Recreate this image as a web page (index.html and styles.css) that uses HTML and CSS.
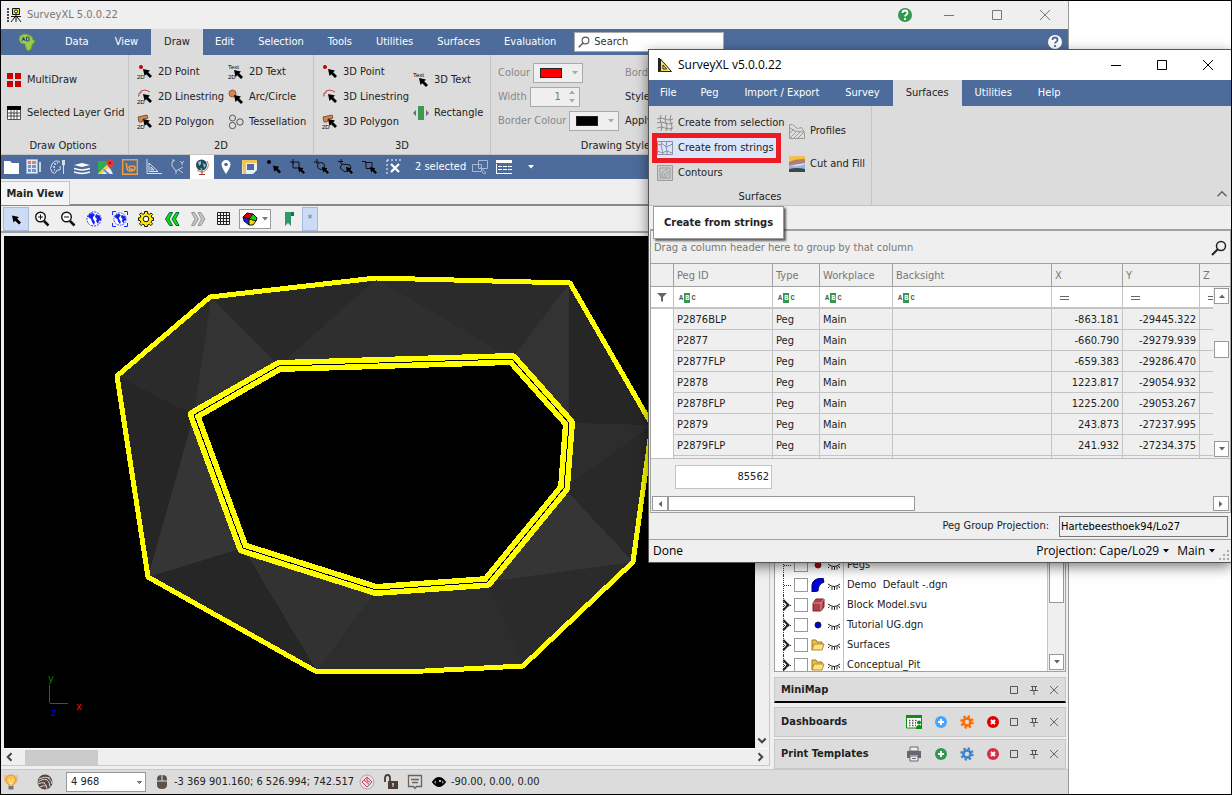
FILE: index.html
```html
<!DOCTYPE html>
<html lang="en">
<head>
<meta charset="utf-8">
<title>SurveyXL 5.0.0.22</title>
<link rel="stylesheet" href="styles.css">
</head>
<body>
<svg class="defs" aria-hidden="true">
  <symbol id="arrow" viewBox="0 0 9 9"><path d="M0 0 7 1.500 5.200 3.200 9 7 7 9 3.200 5.200 1.500 7Z"/></symbol>
  <symbol id="p2d" viewBox="0 0 16 16"><circle cx="4" cy="3" r="2" fill="#c80000"/><use href="#arrow" x="6" y="5" width="9" height="9"/><text class="tag" x="0" y="15">2D</text></symbol>
  <symbol id="l2d" viewBox="0 0 16 16"><path d="M1 7h1V4h2V2l4-1 3 1 2 1" fill="none" stroke="#c04040"/><use href="#arrow" x="6" y="5" width="9" height="9"/><text class="tag" x="0" y="15">2D</text></symbol>
  <symbol id="g2d" viewBox="0 0 16 16"><path d="M1 3l9-2 1 3-5 1-1 3H2Z" fill="#d08850" stroke="#8a5028"/><use href="#arrow" x="6" y="5" width="9" height="9"/><text class="tag" x="0" y="15">2D</text></symbol>
  <symbol id="t2d" viewBox="0 0 16 16"><text class="tag" x="0" y="5">Text</text><use href="#arrow" x="6" y="6" width="9" height="9"/><text class="tag" x="0" y="15">2D</text></symbol>
  <symbol id="arc" viewBox="0 0 16 16"><circle cx="4.500" cy="4.500" r="3.500" fill="#d08850" stroke="#8a6048"/><use href="#arrow" x="6" y="6" width="9" height="9"/></symbol>
  <symbol id="tess" viewBox="0 0 16 16"><g fill="none" stroke="#555"><circle cx="4.500" cy="4" r="3"/><circle cx="4.500" cy="11.500" r="3.200"/><circle cx="12" cy="8" r="3.200"/></g></symbol>
  <symbol id="p3d" viewBox="0 0 16 16"><circle cx="3" cy="3" r="2" fill="#c80000"/><use href="#arrow" x="6" y="5" width="9" height="9"/></symbol>
  <symbol id="l3d" viewBox="0 0 16 16"><path d="M1 7h1V4h2V2l4-1 3 1 2 1" fill="none" stroke="#c04040"/><use href="#arrow" x="6" y="5" width="9" height="9"/></symbol>
  <symbol id="t3d" viewBox="0 0 16 16"><text class="tag" x="0" y="5">Text</text><use href="#arrow" x="6" y="6" width="9" height="9"/></symbol>
  <symbol id="rect" viewBox="0 0 16 16"><path d="M5 1h6v14H5z" fill="#3a9a50"/><path d="M3 5v6L0 8zM13 5v6l3-3z" fill="#667"/></symbol>
  <symbol id="multi" viewBox="0 0 16 16"><path d="M1 1h6v6H1zM9 1h6v6H9zM1 9h6v6H1zM9 9h6v6H9z" fill="#c80000"/></symbol>
  <symbol id="grid" viewBox="0 0 16 16"><path d="M1 1h14v14H1z" fill="#fff"/><path d="M1 1h14v4H1z"/><path d="M1.500 4v10.500h13V4M5 4v10M8 4v10M11 4v10M2 8h12M2 11h12" fill="none" stroke="#222" stroke-width=".8"/></symbol>
  <symbol id="mesh" viewBox="0 0 16 16"><path d="M4 0q-2 4 0 8t0 8M9 0q-2 4 0 8t0 8M14 0q-2 4 0 8t0 8M0 4q4-2 8 0t8 0M0 8q4-2 8 0t8 0M0 13q4-2 8 0t8 0" fill="none" stroke="#8c8c8c"/></symbol>
  <symbol id="strings" viewBox="0 0 16 16"><path d="M.5 1.500h15v13H.5zM.5 5l5-1 4 3 6-3M.5 11l5 2 4-2 6 2M5 1 4 5l2 8-1 2M10 1 9 7l1 4v4" fill="none" stroke="#8791a3"/></symbol>
  <symbol id="contours" viewBox="0 0 16 16"><path d="M.5.500h15v15H.5zM3 3h10v10H3zM5 12c0-7 2-7 6-7M7 13c0-5 2-6 5-6M9 13c0-3 1-4 3-4" fill="#ccc" stroke="#9c9c9c"/></symbol>
  <symbol id="profiles" viewBox="0 0 16 16"><path d="M.5 15.500V1.500h3l5 4 4-1 3 5v6zM1 5l5 3 9 1M1 15l6-6M5 15l6-6M9 15l6-6M1 10l4-4" fill="none" stroke="#9a9a9a"/></symbol>
  <symbol id="cutfill" viewBox="0 0 16 16"><path d="M0 0h16v6H0z" fill="#f5c04a"/><path d="M0 6q5-3 16-3v4q-8 1-16 3z" fill="#b08070"/><path d="M0 9q8 3 16-1v6H0z" fill="#8ab8f0"/><path d="M0 13q8-2 16 0v3H0z" fill="#444"/></symbol>
  <symbol id="min" viewBox="0 0 12 12"><path d="M1 6.500h10" stroke="currentColor"/></symbol>
  <symbol id="max" viewBox="0 0 12 12"><path d="M1.500 1.500h9v9h-9z" fill="none" stroke="currentColor"/></symbol>
  <symbol id="x" viewBox="0 0 12 12"><path d="M1 1l10 10M11 1 1 11" stroke="currentColor"/></symbol>
  <symbol id="boxs" viewBox="0 0 10 10"><path d="M1.500 1.500h7v7h-7z" fill="none" stroke="#555"/></symbol>
  <symbol id="pin" viewBox="0 0 10 10"><path d="M2 1.500h6M3.500 1v4M6.500 1v4M1 5.500h8M5 6v4" fill="none" stroke="#555"/></symbol>
  <symbol id="xs" viewBox="0 0 10 10"><path d="M1 1l8 8M9 1 1 9" stroke="#666"/></symbol>
  <symbol id="mag" viewBox="0 0 16 16"><circle cx="10" cy="6" r="4.500" fill="none" stroke="currentColor" stroke-width="1.500"/><path d="M7 9l-6 6" stroke="currentColor" stroke-width="2"/></symbol>
  <symbol id="help" viewBox="0 0 16 16"><circle cx="8" cy="8" r="7" fill="currentColor"/><path class="q" d="M5.500 6q0-2.500 2.500-2.500T10.500 6q0 1.200-1.500 2-1 .600-1 1.500M8 11v2" fill="none" stroke-width="1.800"/></symbol>
  <symbol id="globe" viewBox="0 0 16 16"><circle cx="8" cy="8" r="7" fill="#fff" stroke="#1b2cff" stroke-dasharray="2 1"/><path d="M3 3l4-1 2 2-2 2v2l2 3-1 3-2-3-1-3-3-2zM10 3l4 2 1 4-2 1-1 3-2-3 1-2-2-2z" fill="#1420f0"/></symbol>
  <symbol id="globebox" viewBox="0 0 16 16"><path d="M.5 4V.5H4M12 .5h3.500V4M15.500 12v3.500H12M4 15.500H.5V12" fill="none" stroke="#1b2cff"/><use href="#globe" x="1" y="1" width="14" height="14"/></symbol>
  <symbol id="gear" viewBox="0 0 16 16"><circle cx="8" cy="8" r="6.200" fill="none" stroke="currentColor" stroke-width="3" stroke-dasharray="2.500 2.370"/><circle cx="8" cy="8" r="4" fill="none" stroke="currentColor" stroke-width="3"/></symbol>
  <symbol id="ygear" viewBox="0 0 16 16"><path d="M6.500.500h3v2l2 .8 1.500-1.400 1.600 1.600L13.200 5l.8 1.800h1.500v2.700H14l-.8 1.800 1.400 1.500-1.800 1.800-1.500-1.400-1.800.8v1.500h-3V14l-1.800-.8-1.500 1.400-1.800-1.800 1.400-1.500L2 9.500H.5V6.800H2L2.800 5 1.400 3.500 3.200 1.900l1.500 1.400 1.800-.8z" fill="#ffe800" stroke="#111"/><circle cx="8" cy="8" r="2.800" fill="#fff" stroke="#111"/></symbol>
  <symbol id="plus" viewBox="0 0 12 12"><circle cx="6" cy="6" r="6" fill="currentColor"/><path d="M6 3v6M3 6h6" stroke="#fff" stroke-width="2"/></symbol>
  <symbol id="del" viewBox="0 0 12 12"><circle cx="6" cy="6" r="6" fill="currentColor"/><path d="M4 4l4 4M8 4l-4 4" stroke="#fff" stroke-width="2"/></symbol>
  <symbol id="lash" viewBox="0 0 12 8"><path d="M0 1q6 5 12 0M1.500 3.500 0 5M4 4v3M6.500 4v3M9 3.500v3M10.500 3l1.500 2" fill="none" stroke="#222"/></symbol>
  <symbol id="folder" viewBox="0 0 14 12"><path d="M1 1h4l1 2h5v3H4l-3 5z" fill="#e8c24e" stroke="#a57b14"/><path d="M3 5h10l-2 6H1z" fill="#ffe08a" stroke="#b68b20"/></symbol>
  <symbol id="caret" viewBox="0 0 6 4"><path d="M0 0h6L3 3.500z" fill="currentColor"/></symbol>
  <symbol id="cropsel" viewBox="0 0 16 16"><path d="M3 0v5M0 3h9v6H3V3" fill="none" stroke="#111"/><use href="#arrow" x="8" y="8" width="7" height="7"/></symbol>
  <symbol id="chev" viewBox="0 0 8 8"><path d="M1 2l3 3 3-3" fill="none" stroke="#444" stroke-width="1.600"/></symbol>
  <symbol id="thin" viewBox="0 0 8 8"><path d="M1 5.500l3-3 3 3" fill="none" stroke="#666"/></symbol>
</svg>

<div class="desktop">
  <main class="window app">
    <header class="titlebar">
      <svg class="i16" viewBox="0 0 16 16"><path d="M1 1v14" stroke="#111" stroke-width="1.500" stroke-dasharray="2 1"/><path d="M5.500 1.500h7v6h-7z" fill="#ffe800" stroke="#111"/><circle cx="9" cy="4.500" r="1.500" fill="#fff" stroke="#111"/><path d="M4 9.500h10M9 8v7M8 10l-4 5M10 10l4 5" stroke="#111" fill="none"/></svg>
      <span class="name">SurveyXL 5.0.0.22</span>
      <button class="ghelp" aria-label="Help"><svg class="i16"><use href="#help"/></svg></button>
      <button class="wbtn" aria-label="Minimize"><svg class="i12"><use href="#min"/></svg></button>
      <button class="wbtn" aria-label="Maximize"><svg class="i12"><use href="#max"/></svg></button>
      <button class="wbtn" aria-label="Close"><svg class="i12"><use href="#x"/></svg></button>
    </header>
    <nav class="menubar">
      <button class="logo" aria-label="Application menu"><svg width="18" height="18" viewBox="0 0 18 18"><path d="M2 3l4-2 5 1 3 2 1 3 2 1-3 4-1 4-3 2-2-3-1-4-4-1-2-3z" fill="#9ccb48" stroke="#6fa832"/><path d="M4 8l1.500-4L7 8M4.500 6.500h2M8.500 4v4h2l1-1-1-1 1-1-1-1z" fill="none" stroke="#23407a"/></svg></button>
      <button>Data</button><button>View</button><button class="on">Draw</button><button>Edit</button><button>Selection</button><button>Tools</button><button>Utilities</button><button>Surfaces</button><button>Evaluation</button>
      <label class="search"><svg width="12" height="12" color="#555"><use href="#mag"/></svg><input type="text" placeholder="Search" aria-label="Search"></label>
      <button class="mhelp" aria-label="Help"><svg class="i16"><use href="#help"/></svg></button>
    </nav>
    <section class="ribbon">
      <div class="group g1">
        <div class="cols"><div class="col two">
          <button><svg class="i16"><use href="#multi"/></svg>MultiDraw</button>
          <button><svg class="i16"><use href="#grid"/></svg>Selected Layer Grid</button>
        </div></div>
        <h3>Draw Options</h3>
      </div>
      <div class="group g2">
        <div class="cols"><div class="col">
          <button><svg class="i16"><use href="#p2d"/></svg>2D Point</button>
          <button><svg class="i16"><use href="#l2d"/></svg>2D Linestring</button>
          <button><svg class="i16"><use href="#g2d"/></svg>2D Polygon</button>
        </div><div class="col">
          <button><svg class="i16"><use href="#t2d"/></svg>2D Text</button>
          <button><svg class="i16"><use href="#arc"/></svg>Arc/Circle</button>
          <button><svg class="i16"><use href="#tess"/></svg>Tessellation</button>
        </div></div>
        <h3>2D</h3>
      </div>
      <div class="group g3">
        <div class="cols"><div class="col">
          <button><svg class="i16"><use href="#p3d"/></svg>3D Point</button>
          <button><svg class="i16"><use href="#l3d"/></svg>3D Linestring</button>
          <button><svg class="i16"><use href="#g2d"/></svg>3D Polygon</button>
        </div><div class="col two">
          <button><svg class="i16"><use href="#t3d"/></svg>3D Text</button>
          <button><svg class="i16"><use href="#rect"/></svg>Rectangle</button>
        </div></div>
        <h3>3D</h3>
      </div>
      <div class="group g4">
        <div class="cols"><div class="fields">
          <div class="field"><span>Colour</span><button class="combo" aria-label="Colour"><i class="sw red"></i><svg class="car"><use href="#caret"/></svg></button></div>
          <div class="field"><label for="lw">Width</label><span class="combo spin"><input id="lw" type="text" value="1"><span class="ud"><svg class="car up"><use href="#caret"/></svg><svg class="car"><use href="#caret"/></svg></span></span></div>
          <div class="field"><span>Border Colour</span><button class="combo" aria-label="Border Colour"><i class="sw"></i><svg class="car"><use href="#caret"/></svg></button></div>
        </div><div class="fields dark">
          <div class="field dim">Border</div><div class="field">Style</div><div class="field">Apply</div>
        </div></div>
        <h3>Drawing Styles</h3>
      </div>
    </section>
    <div class="quick">
      <button aria-label="Open"><svg class="i16" viewBox="0 0 16 16"><path d="M0 2h6l2 2h7v11H0z" fill="#fff"/></svg></button>
      <button aria-label="Layout"><svg class="i16" viewBox="0 0 16 16"><path d="M.5.500h11v14H.5z" fill="#dfe7f2" stroke="#9fb2d0"/><path d="M2 2h3v3H2zM6 2h4v3H6z" fill="#e08060"/><path d="M2 6h3v3H2zM6 6h4v3H6zM2 10h3v3H2zM6 10h4v3H6z" fill="#6a98d0"/><path d="M13 3h2v10h-2z" fill="#c4d2e8"/></svg></button>
      <button aria-label="Palette"><svg class="i16" viewBox="0 0 16 16"><path d="M10 3Q5 0 2 5t0 8q3 3 4 0t3-2 1-4" fill="none" stroke="#d5deec"/><path d="M4 5h2M3 8h2M7 4h1M4 11h1" stroke="#d5deec" stroke-width="1.500"/><path d="M13.500 1v14M12.500 1v5h2V1" stroke="#d5deec" fill="none"/></svg></button>
      <button aria-label="Layers"><svg class="i16" viewBox="0 0 16 16"><path d="M0 6l8-2 8 2-8 2z" fill="#fff"/><path d="M0 9.500q8 3 16 0M0 13q8 3 16 0" fill="none" stroke="#fff" stroke-width="1.500"/></svg></button>
      <button aria-label="Maps"><svg class="i16" viewBox="0 0 16 16"><path d="M0 2h10l4 13H0z" fill="#34a853"/><path d="M0 15L10 5l5 10z" fill="#e8eef6"/><path d="M0 15 9 6l1 3-6 6z" fill="#fbcd3a"/><path d="M9 15l-4-4 1-1 6 5z" fill="#4285f4"/><path d="M12 0a3.500 3.500 0 0 1 3.500 4Q15 7 12 10 9 7 8.500 4A3.500 3.500 0 0 1 12 0" fill="#e53a35"/><circle cx="12" cy="4" r="1.300" fill="#8a1a16"/></svg></button>
      <button aria-label="Bentley"><svg class="i16" viewBox="0 0 16 16"><path d="M.7.700h14.600v14.600H.7z" fill="none" stroke="#f0a040" stroke-width="1.400"/><path d="M4 4q1 2 1 5 0 3 4 3t4-3q0-2-3-2t-3 1 1 2 3 0" fill="none" stroke="#f0a040" stroke-width="1.600"/></svg></button>
      <button aria-label="Measure"><svg class="i16" viewBox="0 0 16 16"><path d="M1 0v14.500h15M3 4v8.500h9zM5 8v3h3z" fill="none" stroke="#d5deec"/></svg></button>
      <button aria-label="Axes"><svg class="i16" viewBox="0 0 16 16"><path d="M5 1l-3 2v4l4 5 7-4M3 0v3M10 2l2 2v2M12 4l2-2M9 11l4 3M6 12v3" fill="none" stroke="#c2cde0"/></svg></button>
      <button class="lit" aria-label="World"><svg class="i16" viewBox="0 0 16 16"><circle cx="7.500" cy="6" r="5.500" fill="#1d4a5c"/><path d="M4 3l3-1v3L5 7zM9 4l3 2-2 3zM6 9l3 1-2 1z" fill="#9cc4cc"/><path d="M13 2q3 5-1 9t-9 0" fill="none" stroke="#c87838"/><path d="M8 12v3M5 15.500h6" stroke="#a33"/></svg></button>
      <button aria-label="Place"><svg class="i16" viewBox="0 0 16 16"><path d="M8 1a4.500 4.500 0 0 1 4.500 4.500Q12 9 8 15 4 9 3.500 5.500A4.500 4.500 0 0 1 8 1" fill="#fff"/><circle cx="8" cy="5.500" r="1.800" fill="#4d6c9b"/></svg></button>
      <button aria-label="Sheet"><svg class="i16" viewBox="0 0 16 16"><path d="M0 1h15v10l-4 4H0z" fill="#e8eef6"/><path d="M0 1h15v3H4v11H1z" fill="#f1c453"/><path d="M5 5h7v6H5z" fill="#4d6c9b"/></svg></button>
      <button aria-label="Select point"><svg class="i16" viewBox="0 0 16 16"><circle cx="3" cy="3" r="2"/><use href="#arrow" x="7" y="6" width="8" height="9"/></svg></button>
      <button aria-label="Select rectangle"><svg class="i16"><use href="#cropsel"/></svg></button>
      <button aria-label="Select circle"><svg class="i16" viewBox="0 0 16 16"><path d="M3 0v5M0 3h5" stroke="#111"/><circle cx="7" cy="7" r="3.500" fill="none" stroke="#111"/><use href="#arrow" x="8" y="8" width="7" height="7"/></svg></button>
      <button aria-label="Select polygon"><svg class="i16" viewBox="0 0 16 16"><path d="M3 0v5M0 2.500h5M4 5l8 1 1 3-6 4-5-4z" fill="none" stroke="#111"/><use href="#arrow" x="8" y="8" width="7" height="7"/></svg></button>
      <button aria-label="Deselect"><svg class="i16" viewBox="0 0 16 16"><path d="M0 2.500h4M3 3.500h7v6H4v-6" fill="none" stroke="#111"/><use href="#arrow" x="8" y="8" width="7" height="7"/></svg></button>
      <button aria-label="Clear selection"><svg class="i16" viewBox="0 0 16 16"><path d="M1 1h14M1 1v14" stroke="#fff" stroke-dasharray="2 2"/><path d="M5 5l8 8M13 5l-8 8" stroke="#fff" stroke-width="2.200"/></svg></button>
      <span class="count">2 selected</span>
      <button aria-label="Toggle"><svg class="i16" viewBox="0 0 16 16"><path d="M6.500 1.500h9v8h-9zM.5 5.500h9v7h-9zM9 8l5 6-2 1-2-2z" fill="none" stroke="#a9b9d3"/></svg></button>
      <button aria-label="Table"><svg class="i16" viewBox="0 0 16 16"><path d="M0 1h16v3H0zM0 5h1v10H0zM0 14h16v1H0z" fill="#fff"/><path d="M2 7.500h14M2 10.500h14" stroke="#fff" stroke-dasharray="4 1"/></svg></button>
      <button class="more" aria-label="More"><svg class="car"><use href="#caret"/></svg></button>
    </div>
    <div class="tabs"><button>Main View</button></div>
    <div class="vtools">
      <button class="sel" aria-label="Pointer"><svg class="i16" viewBox="0 0 16 16"><use href="#arrow" x="4" y="4" width="9" height="10"/></svg></button>
      <button aria-label="Zoom in"><svg class="i16" viewBox="0 0 16 16"><circle cx="6.500" cy="6" r="4.800" fill="#fff" stroke="#111" stroke-width="1.400"/><path d="M4 6h5M6.500 3.500v5" stroke="#111"/><path d="M10 10l4.500 4.500" stroke="#111" stroke-width="2.500"/></svg></button>
      <button aria-label="Zoom out"><svg class="i16" viewBox="0 0 16 16"><circle cx="6.500" cy="6" r="4.800" fill="#fff" stroke="#111" stroke-width="1.400"/><path d="M4 6h5" stroke="#111"/><path d="M10 10l4.500 4.500" stroke="#111" stroke-width="2.500"/></svg></button>
      <button aria-label="Zoom extents"><svg class="i16"><use href="#globe"/></svg></button>
      <button aria-label="Zoom selection"><svg class="i16"><use href="#globebox"/></svg></button>
      <button aria-label="Settings"><svg class="i16"><use href="#ygear"/></svg></button>
      <button aria-label="Previous view"><svg class="i16" viewBox="0 0 16 16"><path d="M5.500 1.500h3L5 8l3.500 6.500h-3L1.500 8zM12 1.500h3L11.500 8l3.500 6.500h-3L8 8z" fill="#12e012" stroke="#063"/></svg></button>
      <button aria-label="Next view"><svg class="i16" viewBox="0 0 16 16"><path d="M1.500 1.500h3L8.500 8l-4 6.500h-3L5 8zM8 1.500h3L15 8l-4 6.500H8L11.500 8z" fill="#c4c4c4" stroke="#999"/></svg></button>
      <button aria-label="Grid"><svg class="i16" viewBox="0 0 16 16"><path d="M1.500 1.500h12v12h-12zM4.500 1v13M7.500 1v13M10.500 1v13M1 4.500h13M1 7.500h13M1 10.500h13" fill="none" stroke="#222"/></svg></button>
      <button class="shade" aria-label="Shading"><svg class="i16" viewBox="0 0 16 16"><path d="M7 8l-6-2 4-4 6 1z" fill="#e00000"/><path d="M7 8l4-5 4 4-1 3z" fill="#10d010"/><path d="M7 8l7 2-3 4H7z" fill="#f0e000"/><path d="M7 8v6l-5-4-1-4z" fill="#2020e0"/><path d="M7 8l-6-2 4-4 6 1 4 4-1 3-3 4H7l-5-4-1-4M7 8l4-5M7 8l7 2M7 8v6" fill="none" stroke="#111"/></svg><svg class="car"><use href="#caret"/></svg></button>
      <button class="mark" aria-label="Bookmark"><svg class="i16" viewBox="0 0 16 16"><path d="M4 1h9v4h-3v10l-3-3-3 3z" fill="#2f9a68"/><path d="M10 1h3v4h-3z" fill="#1c6e48"/></svg></button>
      <button class="star sel" aria-label="Customize">*</button>
    </div>
    <div class="work">
      <div class="view">
        <svg class="scene" aria-label="3D view"><g transform="translate(-4 -236)">
          <g shape-rendering="crispEdges">
            <path fill="#2b2b2b" d="M117 376 211 298 194 415z"/><path fill="#333" d="M211 298 279 366 194 415z"/>
            <path fill="#292929" d="M211 298 376 279 279 366z"/><path fill="#2f2f2f" d="M376 279 512 359 279 366z"/>
            <path fill="#2b2b2b" d="M376 279 569 284 512 359z"/><path fill="#333" d="M569 284 569 423 512 359z"/>
            <path fill="#262626" d="M569 284 652 425 569 423z"/><path fill="#2d2d2d" d="M652 425 569 423 564 488z"/>
            <path fill="#292929" d="M652 425 633 562 564 488z"/><path fill="#353535" d="M633 562 487 582 564 488z"/>
            <path fill="#2b2b2b" d="M633 562 523 665 487 582z"/><path fill="#2d2d2d" d="M523 665 425 671 317 671 376 590 487 582z"/>
            <path fill="#323232" d="M243 548 376 590 317 671z"/><path fill="#262626" d="M148 577 317 671 243 548z"/>
            <path fill="#353535" d="M148 577 243 548 194 415z"/><path fill="#262626" d="M117 376 148 577 194 415z"/>
            <path d="M117 376 210 297 376 278 570 283 652 425 633 562 523 666 425 671 317 672 148 577z" fill="none" stroke="#ff0" stroke-width="5" stroke-linejoin="round"/>
            <path d="M194 415 279 366 512 359 569 423 564 488 487 582 376 590 243 548z" fill="#000" stroke="#ff0" stroke-width="12" stroke-linejoin="round"/>
            <path d="M194 415 279 366 512 359 569 423 564 488 487 582 376 590 243 548z" fill="none" stroke="#000"/>
            <path d="M49.500 685v18" stroke="#008000"/><path d="M50 703.500h18" stroke="#f00"/>
          </g>
          <text x="48" y="682" fill="#008000">y</text><text x="76" y="710" fill="#f00">x</text><text x="51" y="716" fill="#00f">z</text>
        </g></svg>
        <div class="vbar"><svg width="10" height="10"><use href="#chev"/></svg></div>
        <div class="hbar"><svg class="left" width="10" height="10"><use href="#chev"/></svg><span class="thumb"></span><svg class="right" width="10" height="10"><use href="#chev"/></svg></div>
      </div>
      <aside class="side">
        <div class="tree">
          <ul>
            <li class="leaf"><i></i><input type="checkbox" aria-label="Pegs"><svg class="ico" viewBox="0 0 14 14"><circle cx="7" cy="7" r="3" fill="#c80000" stroke="#333"/></svg><svg class="lash"><use href="#lash"/></svg><span>Pegs</span></li>
            <li class="leaf"><i></i><input type="checkbox" aria-label="Demo"><svg class="ico" viewBox="0 0 14 14"><path d="M1 14V7q1-7 11-7l1 4Q7 6 7 13z" fill="#0000dc" stroke="#000060"/></svg><svg class="lash"><use href="#lash"/></svg><span>Demo&nbsp; Default -.dgn</span></li>
            <li><i></i><input type="checkbox" aria-label="Block Model"><svg class="ico" viewBox="0 0 14 14"><path d="M2 5l3-4h8v8l-3 4H2z" fill="#b04048" stroke="#7a2028"/><path d="M2 5h8v8M10 5l3-4" fill="none" stroke="#e09098"/></svg><svg class="lash"><use href="#lash"/></svg><span>Block Model.svu</span></li>
            <li><i></i><input type="checkbox" aria-label="Tutorial UG"><svg class="ico" viewBox="0 0 14 14"><circle cx="7" cy="7" r="3" fill="#0000dc" stroke="#222"/></svg><svg class="lash"><use href="#lash"/></svg><span>Tutorial UG.dgn</span></li>
            <li><i></i><input type="checkbox" aria-label="Surfaces"><svg class="ico"><use href="#folder"/></svg><svg class="lash"><use href="#lash"/></svg><span>Surfaces</span></li>
            <li><i></i><input type="checkbox" aria-label="Conceptual_Pit"><svg class="ico"><use href="#folder"/></svg><svg class="lash"><use href="#lash"/></svg><span>Conceptual_Pit</span></li>
          </ul>
          <div class="tbar"><span class="thumb"></span><button aria-label="Scroll down"><svg class="car"><use href="#caret"/></svg></button></div>
        </div>
        <div class="dock mini"><h2>MiniMap</h2><svg class="i10"><use href="#boxs"/></svg><svg class="i10"><use href="#pin"/></svg><svg class="i10"><use href="#xs"/></svg></div>
        <div class="dock"><h2>Dashboards</h2>
          <svg class="i16" viewBox="0 0 16 16"><path d="M.5 2h15v12H.5z" fill="#fff" stroke="#0a900a"/><path d="M0 1h16v3H0z" fill="#0a900a"/><path d="M3 6.500h9M3 9h7M3 11.500h7" stroke="#555" stroke-dasharray="1.500 1.500" stroke-width="1.500"/><circle cx="13" cy="8.500" r="2" fill="#0a900a"/><path d="M10 15q0-4 3-4t3 4z" fill="#0a900a"/></svg>
          <svg class="i12 act" color="#4aa5f5"><use href="#plus"/></svg><svg class="i14" color="#ff6a00"><use href="#gear"/></svg><svg class="i12 act" color="#e00000"><use href="#del"/></svg>
          <svg class="i10"><use href="#boxs"/></svg><svg class="i10"><use href="#pin"/></svg><svg class="i10"><use href="#xs"/></svg></div>
        <div class="dock"><h2>Print Templates</h2>
          <svg class="i16" viewBox="0 0 16 16"><path d="M4 1h8v4H4zM4 10h8v5H4z" fill="#eee" stroke="#66686f"/><path d="M1 5h14v7h-3V9H4v3H1z" fill="#66686f"/><path d="M6 12.500h4" stroke="#66686f"/></svg>
          <svg class="i12 act" color="#33974d"><use href="#plus"/></svg><svg class="i14" color="#4583c8"><use href="#gear"/></svg><svg class="i12 act" color="#d22f45"><use href="#del"/></svg>
          <svg class="i10"><use href="#boxs"/></svg><svg class="i10"><use href="#pin"/></svg><svg class="i10"><use href="#xs"/></svg></div>
      </aside>
    </div>
    <footer class="status">
      <svg class="i16 bulb" viewBox="0 0 16 16"><path d="M1 1h14v6l-4 4v2H5v-2L1 7z" fill="#ecc48a"/><circle cx="8" cy="6" r="5" fill="#ffc04a" stroke="#d89a3c"/><path d="M6 5l2 6 2-6" fill="none" stroke="#fff0b0"/><path d="M5.500 12h5v3.500h-5z" fill="#777"/></svg>
      <svg class="i16 ball" viewBox="0 0 16 16"><circle cx="8" cy="8" r="7.500" fill="#574a44"/><path d="M2 5q5-3 11-1M1 8q6-4 8-2M1 10q4-2 7-1M3 13q4-2 6-1M9 5q4 2 4 8M11 4q4 2 4 6M7 9q3 2 3 6" fill="none" stroke="#d8d2ce"/></svg>
      <select aria-label="Scale"><option>4 968</option></select>
      <svg class="i16" viewBox="0 0 16 16"><path d="M3 6.500V5q0-4 4.500-4v5.500zM8.500 1Q13 1 13 5v1.500H8.500zM3 7.500h10V11q0 4-5 4t-5-4z" fill="#5f5049"/></svg>
      <span class="coords">-3 369 901.160; 6 526.994; 742.517</span>
      <svg class="i16" viewBox="0 0 16 16"><circle cx="8" cy="8" r="7" fill="#e8e0e0" stroke="#aaa"/><path d="M3 8l5-5 5 5-5 5zM5 6l6 5M8 3v4l3 1" fill="none" stroke="#d04050"/></svg>
      <svg class="i16" viewBox="0 0 16 16"><path d="M2 8V4q0-3 2.500-3T7 4v3" fill="none" stroke="#4c3c34" stroke-width="1.800"/><path d="M5 7h10v8H5z" fill="#4c3c34"/><path d="M10 9v4M9 10h2" stroke="#ddd"/></svg>
      <svg class="i16" viewBox="0 0 16 16"><path d="M1.500 1.500h13v11h-5L8 14.500l-1.500-2h-5zM4 5.500h8M5 8.500h6" fill="none" stroke="#6f6259" stroke-width="1.300"/></svg>
      <svg class="i16" viewBox="0 0 16 16"><path d="M2 8q6-8 12 0-6 8-12 0z" fill="#fff" stroke="#000" stroke-width="2"/><circle cx="8" cy="8" r="3.500"/><circle cx="9" cy="7" r="1" fill="#fff"/></svg>
      <span>-90.00, 0.00, 0.00</span>
    </footer>
  </main>

  <section class="window dialog" role="dialog" aria-label="SurveyXL v5.0.0.22">
    <header class="titlebar">
      <svg class="i16" viewBox="0 0 16 16"><path d="M1 1h2v14H1z" fill="#222"/><path d="M3.500 2l11 12.500h-11zM6 8v4h3.500z" fill="#ffe14a" fill-rule="evenodd" stroke="#222"/></svg>
      <span class="name">SurveyXL v5.0.0.22</span>
      <button class="wbtn" aria-label="Minimize"><svg class="i12"><use href="#min"/></svg></button>
      <button class="wbtn" aria-label="Maximize"><svg class="i12"><use href="#max"/></svg></button>
      <button class="wbtn" aria-label="Close"><svg class="i12"><use href="#x"/></svg></button>
    </header>
    <nav class="menubar">
      <button>File</button><button>Peg</button><button>Import / Export</button><button>Survey</button><button class="on">Surfaces</button><button>Utilities</button><button>Help</button>
    </nav>
    <section class="ribbon">
      <div class="group g5">
        <div class="cols"><div class="col">
          <button><svg class="i16"><use href="#mesh"/></svg>Create from selection</button>
          <button class="hot"><svg class="i16"><use href="#strings"/></svg>Create from strings</button>
          <button><svg class="i16"><use href="#contours"/></svg>Contours</button>
        </div><div class="col two">
          <button><svg class="i16"><use href="#profiles"/></svg>Profiles</button>
          <button><svg class="i16"><use href="#cutfill"/></svg>Cut and Fill</button>
        </div></div>
        <h3>Surfaces</h3>
      </div>
      <button class="fold" aria-label="Collapse ribbon"><svg width="12" height="12"><use href="#thin"/></svg></button>
    </section>
    <div class="strip"></div>
    <div class="gridbox">
      <div class="grouping"><span>Drag a column header here to group by that column</span><svg class="i16"><use href="#mag"/></svg></div>
      <div class="tablewrap">
        <table>
          <colgroup><col class="c0"><col class="c1"><col class="c2"><col class="c3"><col><col class="c5"><col class="c6"><col class="c7"></colgroup>
          <thead>
            <tr><th></th><th>Peg ID</th><th>Type</th><th>Workplace</th><th>Backsight</th><th>X</th><th>Y</th><th>Z</th></tr>
            <tr class="filter"><td><svg width="10" height="9" viewBox="0 0 10 9"><path d="M0 0h10L6 4v5L4 8V4z" fill="#666"/></svg></td><td><span class="abc">A<b>B</b>C</span></td><td><span class="abc">A<b>B</b>C</span></td><td><span class="abc">A<b>B</b>C</span></td><td><span class="abc">A<b>B</b>C</span></td><td><i class="eq"></i></td><td><i class="eq"></i></td><td><i class="eq"></i></td></tr>
          </thead>
          <tbody>
            <tr><td></td><td>P2876BLP</td><td>Peg</td><td>Main</td><td></td><td>-863.181</td><td>-29445.322</td><td></td></tr>
            <tr><td></td><td>P2877</td><td>Peg</td><td>Main</td><td></td><td>-660.790</td><td>-29279.939</td><td></td></tr>
            <tr><td></td><td>P2877FLP</td><td>Peg</td><td>Main</td><td></td><td>-659.383</td><td>-29286.470</td><td></td></tr>
            <tr><td></td><td>P2878</td><td>Peg</td><td>Main</td><td></td><td>1223.817</td><td>-29054.932</td><td></td></tr>
            <tr><td></td><td>P2878FLP</td><td>Peg</td><td>Main</td><td></td><td>1225.200</td><td>-29053.267</td><td></td></tr>
            <tr><td></td><td>P2879</td><td>Peg</td><td>Main</td><td></td><td>243.873</td><td>-27237.995</td><td></td></tr>
            <tr><td></td><td>P2879FLP</td><td>Peg</td><td>Main</td><td></td><td>241.932</td><td>-27234.375</td><td></td></tr>
            <tr><td></td><td></td><td></td><td></td><td></td><td></td><td></td><td></td></tr>
          </tbody>
        </table>
        <div class="gbar"><button aria-label="Scroll up"><svg class="car up"><use href="#caret"/></svg></button><span class="thumb"></span><button aria-label="Scroll down"><svg class="car"><use href="#caret"/></svg></button></div>
      </div>
      <div class="summary"><output>85562</output></div>
      <div class="hscroll"><button aria-label="Scroll left"><svg class="car lt"><use href="#caret"/></svg></button><span class="thumb"></span><button aria-label="Scroll right"><svg class="car rt"><use href="#caret"/></svg></button></div>
    </div>
    <div class="proj"><label for="pg">Peg Group Projection:</label><input id="pg" type="text" value="Hartebeesthoek94/Lo27"></div>
    <footer class="dstatus"><span class="done">Done</span><button>Projection: Cape/Lo29<svg class="car"><use href="#caret"/></svg></button><button>Main<svg class="car"><use href="#caret"/></svg></button><svg width="10" height="10" viewBox="0 0 10 10"><path d="M8 0h2v2H8zM4 4h2v2H4zM8 4h2v2H8zM0 8h2v2H0zM4 8h2v2H4zM8 8h2v2H8z" fill="#aaa"/></svg></footer>
    <div class="tip" role="tooltip">Create from strings</div>
  </section>
</div>
</body>
</html>
```
FILE: styles.css
```css
* { box-sizing: border-box; }
:root {
  --blue: #4d6c9b;
  --grey: #dcdcdc;
  --light: #efefef;
  --q: #fff;
  --ui: "DejaVu Sans Condensed", "DejaVu Sans", sans-serif;
  --seg: "Open Sans", "Noto Sans", sans-serif;
}
body { margin: 0; background: #fff; color: #222; font: 11px/16px var(--ui); }
button, input, select { margin: 0; padding: 0; border: 0; background: none; color: inherit; font: inherit; }
button { display: flex; align-items: center; justify-content: center; white-space: nowrap; }
svg { flex: none; display: block; }
h2, h3, ul { margin: 0; padding: 0; font: inherit; list-style: none; }
.defs { display: none; }
.tag { font: 6px "Liberation Sans", sans-serif; }
.i16 { width: 16px; height: 16px; }
.i14 { width: 14px; height: 14px; }
.i12 { width: 12px; height: 12px; }
.i10 { width: 10px; height: 10px; }
.car { width: 6px; height: 4px; }
.up { transform: rotate(180deg); }
.lt { transform: rotate(90deg); }
.rt { transform: rotate(-90deg); }

.desktop { position: relative; display: flex; min-height: 100vh; border: 1px solid #000; overflow: hidden; }
.window { display: flex; flex-direction: column; background: var(--light); }
.app { width: calc(100% - 162px); border-right: 1px solid #999; min-width: 0; }
.dialog { position: absolute; left: 647px; right: 0; top: 48px; border-top: 1px solid #555; border-left: 1px solid #555; border-bottom: 1px solid #555; box-shadow: 0 4px 12px rgba(0, 0, 0, .5); }

.titlebar { display: flex; align-items: center; height: 28px; padding-left: 6px; gap: 4px; color: #777; }
.titlebar .name { flex: 1; }
.dialog .titlebar { height: 30px; padding-left: 8px; background: #fff; color: #000; gap: 2px; font: 12px/16px var(--seg); }
.dialog .name { padding-left: 3px; }
.wbtn { width: 44px; height: 100%; }
.wbtn:last-child { margin-right: 1px; }
.ghelp { width: 20px; margin-right: 8px; color: #2f9a50; }
.q { stroke: var(--q); }

.menubar { display: flex; align-items: stretch; height: 26px; background: var(--blue); color: #fff; }
.menubar button { padding: 0 13px; }
.menubar .on { background: var(--grey); color: #222; }
.app .on ~ button { padding: 0 12px; }
.dialog .menubar button:first-child { padding: 0 11px; }
.menubar .logo { width: 51px; padding: 0; }
.app .menubar .mhelp { --q: var(--blue); margin-left: auto; padding: 0 5px; }
.search { display: flex; align-items: center; gap: 4px; width: 150px; height: 20px; margin: 3px 0 0 6px; padding-left: 3px; border: 1px solid #aaa; background: #fff; }
.search input { flex: 1; min-width: 0; }
.search input::placeholder { color: #333; opacity: 1; }

.ribbon { display: flex; height: 100px; background: var(--grey); border-bottom: 1px solid #c4c4c4; overflow: hidden; }
.group { flex: none; padding-top: 4px; border-right: 1px solid #c4c4c4; }
.cols { display: flex; height: 75px; }
.col { flex: none; display: flex; flex-direction: column; justify-content: center; }
.col button { justify-content: flex-start; gap: 5px; height: 25px; }
.col.two button { height: 33px; }
.group h3 { height: 20px; line-height: 24px; text-align: center; }
.g1 { width: 128px; padding-left: 5px; }
.g2 { width: 185px; padding-left: 8px; }
.g3 { width: 177px; padding-left: 8px; }
.group h3 { margin-left: -8px; }
.g2 .col, .g3 .col { width: 91px; }
.g4 { width: 256px; padding-left: 7px; }
.g5 { width: 223px; padding-left: 8px; }
.g5 .col:first-child { width: 132px; }
.fields { flex: none; display: flex; flex-direction: column; justify-content: center; width: 127px; color: #888; }
.fields.dark { color: #222; }
.field { display: flex; align-items: center; gap: 3px; height: 24px; white-space: nowrap; }
.dim { color: #888; }
.combo { display: flex; align-items: center; justify-content: space-between; width: 50px; height: 20px; padding: 0 4px 0 6px; border: 1px solid #aaa; background: var(--light); color: #aaa; }
.sw { width: 22px; height: 10px; border: 1px solid #222; background: #000; }
.sw.red { background: #f00; }
.spin input { width: 24px; text-align: right; color: #777; }
.ud { display: flex; flex-direction: column; gap: 5px; }
.col .hot { width: 119px; height: 20px; margin: 3px 0 2px; background: #dbe6fa; outline: 5px solid #ed1c24; }
.fold { margin-left: auto; align-self: flex-end; width: 18px; height: 22px; }

.quick { display: flex; align-items: stretch; height: 24px; background: var(--blue); color: #fff; }
.quick button { width: 24px; color: #fff; }
.quick button:first-child { width: 21px; }
.quick .lit { background: #fff; }
.quick .count { padding: 4px 2px 0 9px; }
.quick .more { width: 30px; }

.tabs { display: flex; height: 27px; padding-top: 2px; border-bottom: 2px solid #888; }
.tabs button { width: 69px; margin-bottom: -1px; border: 1px solid #c4c4c4; border-width: 1px 1px 0 0; background: #f4f4f4; font-weight: bold; }
.vtools { display: flex; align-items: center; height: 27px; padding-left: 2px; border-bottom: 2px solid #a0a0a0; }
.vtools button { width: 26px; height: 24px; }
.vtools .sel { background: #cddcf5; border: 1px solid #a9b9d8; }
.vtools .shade { width: 32px; height: 20px; margin: 0 5px 0 2px; gap: 4px; border: 1px solid #999; background: #fff; color: #777; }
.vtools .star { width: 16px; color: #777; }

.work { flex: 1; display: flex; min-height: 0; padding-top: 3px; }
.view { flex: 1; min-width: 0; display: grid; grid-template: 1fr 17px / 1fr 14px; margin: 0 4px 3px 0; padding-left: 3px; border: 1px solid #c8c8c8; border-width: 0 1px 1px 0; }
.scene { width: 100%; height: 100%; background: #000; font: 11px var(--ui); }
.vbar { display: flex; align-items: flex-end; justify-content: center; padding-bottom: 2px; }
.hbar { grid-column: 1 / 3; display: flex; align-items: center; border-top: 1px solid #fff; }
.left { transform: rotate(90deg); }
.right { transform: rotate(-90deg); margin: 0 3px 0 auto; }
.hbar .thumb { width: 73px; height: 15px; margin-left: 11px; background: #cbcbcb; }
.side { width: 294px; display: flex; flex-direction: column; padding-right: 2px; }
.tree { flex: 1; min-height: 0; display: flex; align-items: flex-end; margin-bottom: 5px; border: 1px solid #a0a0a0; background: #fff; overflow: hidden; }
.tree ul { flex: 1; margin-bottom: -4px; }
.tree li { display: flex; align-items: center; height: 20px; padding-left: 8px; gap: 3px; }
.tree i { display: flex; align-items: center; width: 8px; height: 20px; border-left: 1px dotted #333; background: linear-gradient(90deg, #333 1px, transparent 1px) 0 10px / 2px 1px repeat-x; }
.tree li:not(.leaf) i::after { content: ""; width: 6px; height: 6px; margin-left: -4px; border: solid #222; border-width: 2px 2px 0 0; transform: rotate(45deg); }
.tree input { appearance: none; width: 14px; height: 14px; border: 1px solid #999; background: #fff; }
.ico { width: 14px; height: 14px; }
.lash { width: 12px; height: 8px; margin-top: 3px; }
.tree li span { align-self: stretch; padding: 2px 0 0 3px; border-left: 1px solid #c0c0c0; }
.tbar { align-self: stretch; display: flex; flex-direction: column; justify-content: flex-end; width: 18px; padding: 0 1px 1px 1px; border-left: 1px solid #c4c4c4; background: var(--light); }
.tbar button, .gbar button { width: 15px; height: 16px; border: 1px solid #999; background: #fff; color: #666; }
.tbar .thumb { flex: 1; width: 15px; margin-bottom: 51px; border: 1px solid #999; background: #fff; }
.dock { display: flex; align-items: center; height: 30px; margin-bottom: 2px; padding: 0 6px; border: 1px solid #c8c8c8; background: var(--grey); }
.dock:last-child { margin-bottom: 0; }
.mini { height: 26px; margin-bottom: 4px; border-bottom: 2px solid #000; }
.dock h2 { flex: 1; font-weight: bold; }
.dock svg + svg { margin-left: 10px; }
.dock .i16 + svg, .dock .i12 + .i14, .dock .i14 + .i12 { margin-left: 13px; }

.status { display: flex; align-items: center; height: 25px; padding-left: 2px; gap: 8px; border-top: 1px solid #c8c8c8; background: var(--grey); }
.ball { margin-left: 10px; }
.status select { appearance: none; width: 80px; height: 20px; margin: 0 0 0 5px; padding-left: 4px; border: 1px solid #999; background: linear-gradient(#777, #777) 70px 8px / 5px 1px no-repeat, linear-gradient(#777, #777) 71px 9px / 3px 1px no-repeat, linear-gradient(#777, #777) 72px 10px / 1px 1px no-repeat, #fff; }
.status span { margin-left: -4px; }
.coords { width: 180px; white-space: nowrap; }
.coords + svg { margin-left: -3px; }

.strip { height: 23px; }
.gridbox { margin-left: 1px; border: 1px solid #a0a0a0; border-top-width: 2px; }
.grouping { display: flex; align-items: center; justify-content: space-between; height: 32px; padding: 2px 3px 0 3px; color: #777; }
.grouping svg { color: #222; }
.tablewrap { position: relative; height: 196px; overflow: hidden; border-bottom: 1px solid #c0c0c0; }
table { width: 100%; table-layout: fixed; border-collapse: separate; border-spacing: 0; }
.c0 { width: 23px; } .c1 { width: 99px; } .c2 { width: 47px; } .c3 { width: 73px; } .c5 { width: 71px; } .c6 { width: 77px; } .c7 { width: 30px; }
th, td { height: 21px; padding: 1px 3px 0; border-right: 1px solid #c4c4c4; border-bottom: 1px solid #c4c4c4; text-align: left; font-weight: normal; white-space: nowrap; }
th { height: 24px; border-color: #a0a0a0; border-top: 1px solid #a0a0a0; color: #777; }
th:last-child { border-right: 0; }
.filter td { height: 22px; border-bottom-width: 2px; background: #fff; }
td:first-child { background: #fff; }
tbody td:first-child { border-bottom: 0; }
.filter td:first-child { padding-left: 6px; }
tbody td:nth-child(6), tbody td:nth-child(7) { text-align: right; }
.abc { display: flex; align-items: center; padding-left: 2px; font: bold 7px/10px "Liberation Mono", monospace; color: #555; }
.abc b { padding: 0 1px; margin: 0 1px; background: #33974d; color: #fff; }
.eq { display: block; width: 9px; height: 4px; margin-left: 5px; border: 1px solid #666; border-width: 1px 0; }
.gbar { position: absolute; right: 0; top: 24px; bottom: 0; width: 17px; padding: 1px; display: flex; flex-direction: column; background: var(--light); }
.gbar .thumb { width: 15px; height: 17px; margin: 37px 0 auto; border: 1px solid #999; background: #fff; }
.summary { padding: 6px 0 7px 24px; }
.summary output { display: block; width: 97px; height: 24px; padding: 3px 2px; border: 1px solid #c4c4c4; background: #fff; text-align: right; }
.hscroll { display: flex; height: 15px; margin: 0 1px 1px; }
.hscroll button { width: 16px; border: 1px solid #999; background: #fff; color: #666; }
.hscroll .thumb { width: 247px; margin-right: auto; border: 1px solid #999; background: #fff; }
.proj { display: flex; align-items: center; justify-content: flex-end; gap: 10px; height: 27px; padding-right: 3px; border-bottom: 1px solid #a0a0a0; }
.proj input { width: 169px; height: 21px; padding-left: 1px; border: 1px solid #777; color: #000; }
.dstatus { display: flex; align-items: center; height: 22px; padding: 0 2px 0 4px; gap: 8px; color: #000; font: 12px/16px var(--seg); }
.dstatus .done { flex: 1; }
.dstatus button { gap: 4px; }
.dstatus > svg { margin: 8px 0 0 -4px; }
.tip { position: absolute; left: 4px; top: 156px; padding: 7px 10px; border: 1px solid #999; background: #fff; box-shadow: 2px 2px 2px rgba(0, 0, 0, .6); font-weight: bold; line-height: 17px; white-space: nowrap; }
```
